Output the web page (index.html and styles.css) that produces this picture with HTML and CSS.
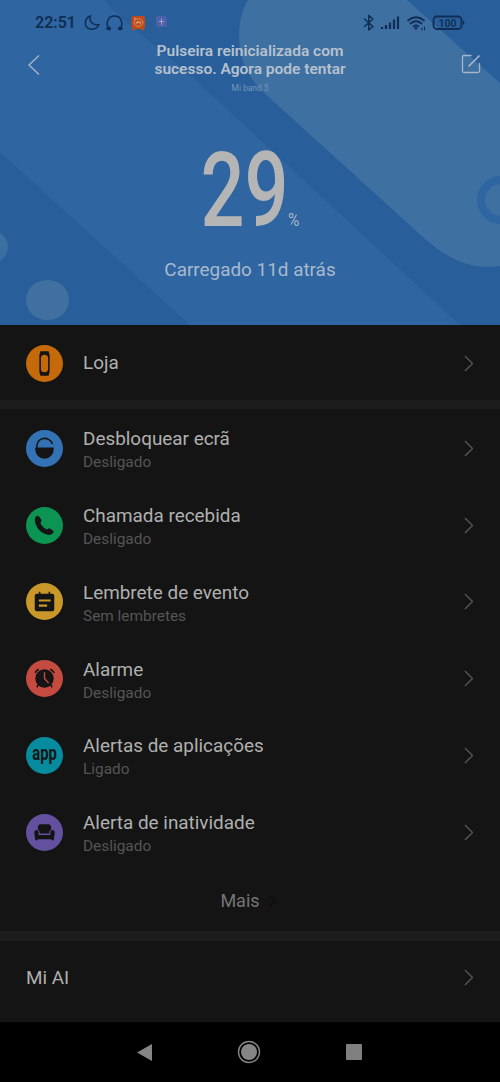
FILE: index.html
```html
<!DOCTYPE html>
<html lang="pt">
<head>
<meta charset="utf-8">
<title>Mi band 5</title>
<link rel="stylesheet" href="styles.css">
</head>
<body>
<header class="hero">
  <svg class="hero-art" viewBox="0 0 500 326">
    <path fill="#2f65a0" d="M0 0H104C120 20 160 48 200 84L461 326H191L0 152Z"/>
    <path fill="#3e70a2" d="M248 0C236 19 232 62 262 91L424 238Q456 267 487 267L500 266V83L407 0Z"/>
    <circle cx="501" cy="200" r="20" fill="#3e70a2" stroke="#2e66a2" stroke-width="8"/>
    <circle cx="-8" cy="247" r="16" fill="#3b6fa2"/>
    <ellipse cx="47.500" cy="300" rx="21.500" ry="20" fill="#3f70a0"/>
  </svg>
  <div class="status">
    <div class="status-left">
      <span class="clock">22:51</span>
      <svg width="85" height="18" viewBox="84 14 85 18" fill="none" stroke="#102e53" stroke-width="1.500" stroke-linecap="round" stroke-linejoin="round">
        <path d="M90.500 16C84 18 83.500 27 90 29C94 30 98 28 99 24.500C94 26 88.500 22 90.500 16Z"/>
        <path d="M109 28.500C105.500 25 107 16 114.500 16S123.500 25 120 28.500"/>
        <circle cx="109" cy="28.500" r="1.200" fill="#102e53"/><circle cx="120" cy="28.500" r="1.200" fill="#102e53"/>
        <path d="M106.500 28.500h1M121.500 28.500h1"/>
        <rect x="132" y="16.500" width="12.500" height="12" rx="1.500" fill="#c04b17" stroke="#c04b17" stroke-width="1"/>
        <path d="M133 29.500h1.500M142 29.500h1.500" stroke="#c04b17"/>
        <ellipse cx="138.500" cy="22.500" rx="4.300" ry="3.800" stroke="#d08b66" stroke-width="1"/>
        <path d="M134.500 18.500l1 .5M136.500 23q2-2 4 0" stroke="#dda183" stroke-width="1.200"/>
        <rect x="156" y="16" width="11" height="11" rx="2" fill="#4b62a9" stroke="none"/>
        <path d="M161.500 19v5.500M159.500 21.500h4" stroke="#a99fce" stroke-width="1"/>
      </svg>
    </div>
    <svg width="103" height="18" viewBox="362 14 103 18" fill="none" stroke="#102e53" stroke-width="1.500" stroke-linecap="round" stroke-linejoin="round">
      <path d="M364.500 19L373 26.500L368.800 30V15.500L373 19L364.500 26.500"/>
      <path stroke-width="2.200" stroke-linecap="butt" d="M382 29v-2M386 29v-4M390 29v-6.500M394 29v-9.500M398 29v-12.500"/>
      <path stroke-width="1.700" d="M408 20.500q8-6.500 16 0M410.500 23.500q5.500-4.500 11 0M413.500 26.300q2.500-2 5 0"/>
      <circle cx="416" cy="28.300" r=".7" fill="#102e53"/>
      <path stroke-width="1.100" d="M422 30v-2M424.500 30v-3"/>
      <rect x="433.500" y="16.500" width="28" height="12.500" rx="3.500" stroke-width="1.800"/>
      <path d="M463.500 21.500v2.500"/>
      <text class="battery" x="447.500" y="26.800" text-anchor="middle">100</text>
    </svg>
  </div>
  <div class="topbar">
    <svg width="14" height="22" viewBox="0 0 14 22"><path d="M12 1.500L2 11L12 20.500" fill="none" stroke="#a5b6ca" stroke-width="1.400"/></svg>
    <div class="heading">
      <h1>Pulseira reinicializada com<br>sucesso. Agora pode tentar</h1>
      <p>Mi band 5</p>
    </div>
    <svg width="20" height="20" viewBox="0 0 20 20" fill="none" stroke="#a5b6ca" stroke-width="1.300"><path d="M10.500 1.500H3Q1.500 1.500 1.500 3V17Q1.500 18.500 3 18.500H17Q18.500 18.500 18.500 17V9"/><path d="M7.500 12.500L18.500 1.500" stroke-width="1.700"/></svg>
  </div>
  <svg class="level" width="110" height="140" viewBox="195 118 110 140">
    <text class="digits" transform="translate(200.500 226) scale(.745 1)">29</text>
    <text class="percent" transform="translate(288 226) scale(.82 1)">%</text>
  </svg>
  <p class="charged">Carregado 11d atrás</p>
</header>
<main>
  <section class="shop">
    <a class="row"><svg class="icon" viewBox="0 0 36 36"><circle cx="18" cy="18" r="18" fill="#c46a0b"/><path fill="#141414" d="M14 6H22L23 10V26L22 30H14L13 26V10Z"/><rect x="14.500" y="9.500" width="7" height="17" rx="3.500" fill="#c46a0b"/></svg>
      <span class="label"><b>Loja</b></span><svg class="go" viewBox="0 0 10 18"><path d="M1 1L9 9L1 17"/></svg></a>
  </section>
  <section class="features">
    <a class="row"><svg class="icon" viewBox="0 0 36 36"><circle cx="18" cy="18" r="18" fill="#3373b5"/><path fill="#141414" d="M9 17H27V19A9 9 0 0 1 9 19Z"/><path d="M10.500 18C10 6 22.500 5.500 25.800 13.500" fill="none" stroke="#141414" stroke-width="1.600"/></svg>
      <span class="label"><b>Desbloquear ecrã</b><small>Desligado</small></span><svg class="go" viewBox="0 0 10 18"><path d="M1 1L9 9L1 17"/></svg></a>
    <a class="row"><svg class="icon" viewBox="0 0 36 36"><circle cx="18" cy="18" r="18" fill="#0c9552"/><path fill="#141414" d="M9.500 9.500Q11 8 12.500 9L15 12.500Q15.500 13.500 14 15.500Q16 20 20.500 22Q22 20.500 23.200 20.800L26.500 23Q27.500 24 26 25.800Q24 27.800 20 26.800Q12 24 9.300 16.500Q7.800 12 9.500 9.500Z"/></svg>
      <span class="label"><b>Chamada recebida</b><small>Desligado</small></span><svg class="go" viewBox="0 0 10 18"><path d="M1 1L9 9L1 17"/></svg></a>
    <a class="row"><svg class="icon" viewBox="0 0 36 36"><circle cx="18" cy="18" r="18" fill="#c99829"/><path fill="#141414" d="M10.500 10.500H12.500V8.500H14V10.500H22V8.500H23.500V10.500H25.500Q27.500 10.500 27.500 12.500V25.500Q27.500 27.500 25.500 27.500H10.500Q8.500 27.500 8.500 25.500V12.500Q8.500 10.500 10.500 10.500Z"/><path d="M12.500 17H24M12.500 22H20.500" stroke="#c99829" stroke-width="2"/></svg>
      <span class="label"><b>Lembrete de evento</b><small>Sem lembretes</small></span><svg class="go" viewBox="0 0 10 18"><path d="M1 1L9 9L1 17"/></svg></a>
    <a class="row"><svg class="icon" viewBox="0 0 36 36"><circle cx="18" cy="18" r="18" fill="#c54a40"/><circle cx="18" cy="18" r="9" fill="#141414"/><path d="M9 12.500Q10 10 12.500 9M23.500 9Q26 10 27.500 12.500M12 24L10.500 26.500M24 24L25.500 26.500" fill="none" stroke="#141414" stroke-width="1.600"/><path d="M18 12V18L22 22.500" fill="none" stroke="#c54a40" stroke-width="1.400"/></svg>
      <span class="label"><b>Alarme</b><small>Desligado</small></span><svg class="go" viewBox="0 0 10 18"><path d="M1 1L9 9L1 17"/></svg></a>
    <a class="row"><svg class="icon" viewBox="0 0 36 36"><circle cx="18" cy="18" r="18" fill="#078b9e"/><text class="app-word" transform="translate(18 22) scale(.74 1)" text-anchor="middle">app</text></svg>
      <span class="label"><b>Alertas de aplicações</b><small>Ligado</small></span><svg class="go" viewBox="0 0 10 18"><path d="M1 1L9 9L1 17"/></svg></a>
    <a class="row"><svg class="icon" viewBox="0 0 36 36"><circle cx="18" cy="18" r="18" fill="#6351a0"/><path fill="#141414" d="M14.500 10H21.500Q24.500 10 24.500 13V15Q22.500 16 22.500 19H13.500Q13.500 16 11.500 15V13Q11.500 10 14.500 10Z"/><path fill="#141414" d="M8 18Q8 15.500 10 15.500Q12.300 15.500 12.300 18V20.500H23.700V18Q23.700 15.500 26 15.500Q28 15.500 28 18L27 25.500H25L24.500 24.500H11.500L11 25.500H9Z"/></svg>
      <span class="label"><b>Alerta de inatividade</b><small>Desligado</small></span><svg class="go" viewBox="0 0 10 18"><path d="M1 1L9 9L1 17"/></svg></a>
    <a class="more">Mais <svg width="7" height="12" viewBox="0 0 7 12"><path d="M1 1L6 6L1 11" fill="none" stroke="#0c0c0c" stroke-width="1.400"/></svg></a>
  </section>
  <section class="assistant">
    <a class="row"><span class="label"><b>Mi AI</b></span><svg class="go" viewBox="0 0 10 18"><path d="M1 1L9 9L1 17"/></svg></a>
  </section>
</main>
<nav class="nav">
  <svg width="15" height="17" viewBox="0 0 15 17"><path d="M0 8.500L15 0V17Z" fill="#858585"/></svg>
  <svg width="24" height="24" viewBox="0 0 24 24"><circle cx="12" cy="12" r="10.500" fill="none" stroke="#858585" stroke-width="1.400"/><circle cx="12" cy="12" r="8" fill="#858585"/></svg>
  <svg width="16" height="16" viewBox="0 0 16 16"><rect width="16" height="16" rx="1" fill="#808080"/></svg>
</nav>
</body>
</html>
```
FILE: styles.css
```css
* { box-sizing: border-box; }
body {
  margin: 0;
  width: 500px;
  height: 1082px;
  overflow: hidden;
  background: #141414;
  font-family: Roboto, "Liberation Sans", sans-serif;
  color: #b0b0b0;
}
h1, p { margin: 0; }
svg { display: block; flex: none; }

.hero {
  position: relative;
  isolation: isolate;
  height: 325px;
  overflow: hidden;
  background: #285e9a;
  display: flex;
  flex-direction: column;
  align-items: center;
}
.hero-art { position: absolute; inset: 0; width: 500px; height: 326px; z-index: -1; }
.status {
  width: 100%;
  padding: 14px 35px 0;
  height: 42px;
  display: flex;
  justify-content: space-between;
}
.status-left { display: flex; gap: 7px; }
.clock { width: 42px; font-size: 16px; line-height: 18px; font-weight: 600; color: #102e53; white-space: nowrap; }
.battery { font: 600 10.500px Roboto, sans-serif; fill: #102e53; stroke: none; }
.topbar {
  width: 100%;
  height: 51px;
  padding: 0 19px 0 27px;
  display: flex;
  justify-content: space-between;
}
.topbar > svg { margin-top: 12px; }
.heading { text-align: center; }
.heading h1 { font-size: 15.5px; line-height: 18px; font-weight: 600; color: #b7c1cd; white-space: nowrap; transform: translateX(-1px); }
.heading p { font-size: 8.4px; line-height: 10px; margin-top: 5px; color: #7897ba; transform: translateX(-1px); }
.level { margin-top: 25px; }
.digits { font: 500 104px Roboto, sans-serif; fill: #b6b5b5; }
.percent { font: 400 19px Roboto, sans-serif; fill: #a9b6c6; }
.charged { font-size: 18.9px; line-height: 24px; color: #a7bacf; }

.row {
  height: 76.75px;
  padding: 0 27px 0 26px;
  display: flex;
  align-items: center;
}
.icon { width: 37px; height: 37px; margin-right: 20px; }
.label { flex: 1; display: flex; flex-direction: column; }
.label b { font-size: 18.9px; line-height: 24px; font-weight: 400; }
.label small { font-size: 15.4px; line-height: 20px; color: #555; margin-top: 1px; }
.go { width: 9.5px; height: 17px; fill: none; stroke: #555; stroke-width: 1.5; }
.app-word { font: 700 19.5px Roboto, sans-serif; fill: #141414; }
.shop { height: 84px; border-bottom: 9px solid #1c1c1c; }
.features { height: 532px; padding-top: 1px; border-bottom: 10px solid #1c1c1c; }
.features .label { padding-top: 3px; }
.more {
  height: 60px;
  padding-right: 4px;
  display: flex;
  align-items: center;
  justify-content: center;
  gap: 9px;
  font-size: 18px;
  color: #757575;
}
.assistant { height: 81px; }
.assistant .row { height: 73px; }
.nav {
  height: 60px;
  background: #000;
  display: flex;
  align-items: center;
  justify-content: space-between;
  padding: 0 138px 0 137px;
}
```
